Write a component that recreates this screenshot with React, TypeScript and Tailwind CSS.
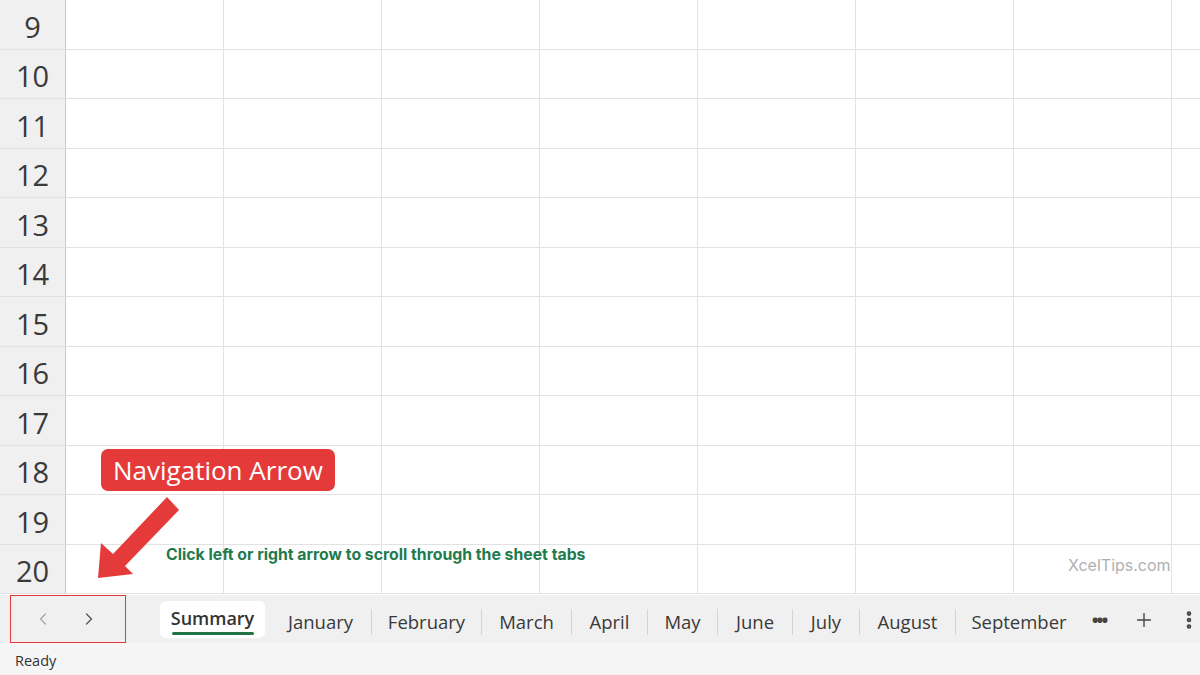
import { ChevronLeft, ChevronRight, Plus, EllipsisVertical } from 'lucide-react';

const ROWS = [9, 10, 11, 12, 13, 14, 15, 16, 17, 18, 19, 20];
const COLS = 7;

// Sheet tabs after the active one; widths keep the separators where the
// screenshot has them.
const TABS: { name: string; w: string }[] = [
  { name: 'January', w: 'w-[102px]' },
  { name: 'February', w: 'w-[110px]' },
  { name: 'March', w: 'w-[90px]' },
  { name: 'April', w: 'w-[76px]' },
  { name: 'May', w: 'w-[70px]' },
  { name: 'June', w: 'w-[75px]' },
  { name: 'July', w: 'w-[67px]' },
  { name: 'August', w: 'w-[96px]' },
  { name: 'September', w: 'w-[126px]' },
];

export default function App() {
  return (
    <div className="relative flex h-[675px] w-[1200px] flex-col overflow-hidden bg-white font-['Open_Sans',sans-serif] text-[#333]">
      {/* Grid */}
      <div className="flex h-[595px] flex-col">
        {ROWS.map((r) => (
          <div key={r} className="flex h-[49.5px] shrink-0">
            <div className="flex w-[66px] shrink-0 items-center justify-center border-r border-b border-r-[#c9c9c9] border-b-[#e2e2e2] bg-[#f0f0f0] pt-[4px] text-[29px] leading-none text-[#3a3a3a]">
              {r}
            </div>
            {Array.from({ length: COLS }).map((_, i) => (
              <div key={i} className="w-[158px] shrink-0 border-r border-b border-[#e2e2e2]" />
            ))}
            <div className="flex-1 border-b border-[#e2e2e2]" />
          </div>
        ))}
      </div>

      {/* Sheet tab bar */}
      <div className="flex h-[48px] items-center bg-[#f0f0f0]">
        <div className="ml-[10px] flex h-[48px] w-[116px] items-center justify-center gap-[26px] border border-[#e0383a] pr-[4px]">
          <ChevronLeft className="h-[20px] w-[20px] text-[#a8a8a8]" strokeWidth={1.5} />
          <ChevronRight className="h-[20px] w-[20px] text-[#555]" strokeWidth={1.5} />
        </div>
        <div className="ml-[34px] flex h-[37px] w-[105px] flex-col items-center justify-center rounded-[6px] bg-white">
          <span className="mt-[6px] text-[18px] font-semibold leading-none text-[#333]">Summary</span>
          <span className="mt-[5px] h-[3px] w-[82px] rounded-full bg-[#217346]" />
        </div>
        <div className="ml-[5px] flex items-center pt-[6px]">
          {TABS.map((t, i) => (
            <div
              key={t.name}
              className={`flex h-[26px] items-center justify-center text-[18.5px] text-[#3a3a3a] ${t.w} ${i < TABS.length - 1 ? 'border-r border-[#d4d4d4]' : ''}`}
            >
              {t.name}
            </div>
          ))}
        </div>
        <div className="flex flex-1 items-center pt-[2px]">
          <span className="flex w-[34px] justify-center text-[18px] font-bold leading-none tracking-[-2px] text-[#444]">•••</span>
          <Plus className="ml-[17px] h-[22px] w-[22px] text-[#444]" strokeWidth={1.5} />
          <EllipsisVertical className="ml-[23px] h-[22px] w-[22px] text-[#444]" strokeWidth={3} />
        </div>
      </div>

      {/* Status bar */}
      <div className="flex h-[32px] items-center bg-[#f5f5f5] px-[15px] pt-[4px] text-[14.5px] text-[#333]">Ready</div>

      {/* Annotation callout */}
      <div className="absolute left-[101px] top-[449px] rounded-[7px] bg-[#e53a3a] px-[12px] py-[2px] text-[26px] leading-[38px] text-white">
        Navigation Arrow
      </div>
      <svg className="absolute left-[90px] top-[490px]" width="100" height="100" viewBox="90 490 100 100" aria-hidden>
        <polygon
          points="98,578 101,543 113,554 167,497 179,510 125,566 133,574"
          fill="#e53a3a"
        />
      </svg>

      <div className="absolute left-[166px] top-[543px] font-['Inter',sans-serif] text-[15.8px] font-bold text-[#1f7a4d]">
        Click left or right arrow to scroll through the sheet tabs
      </div>

      <div className="absolute left-[1068px] top-[553px] font-['Inter',sans-serif] text-[16px] text-[#b0b0b0]">
        XcelTips.com
      </div>
    </div>
  );
}
